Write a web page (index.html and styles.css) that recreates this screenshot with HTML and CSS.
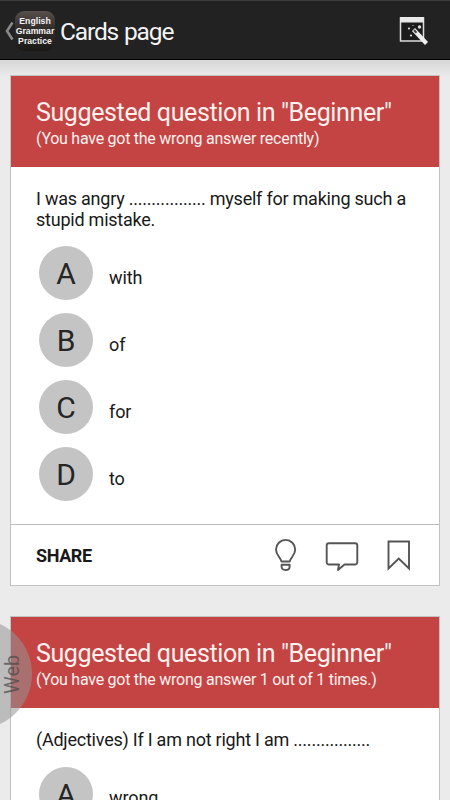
FILE: index.html
```html
<!DOCTYPE html>
<html lang="en">
<head>
<meta charset="utf-8">
<title>Cards page</title>
<link rel="stylesheet" href="styles.css">
</head>
<body>
<header class="bar">
  <svg class="back" width="9" height="20" viewBox="0 0 9 20"><path d="M7.500 1.500 2 10l5.500 8.500" fill="none" stroke="#888" stroke-width="2.600"/></svg>
  <div class="logo">English<br>Grammar<br>Practice</div>
  <h1 class="bar-title">Cards page</h1>
  <svg class="wand" width="30" height="30" viewBox="0 0 30 30">
    <path d="M1.500 2h23v23h-23z" fill="#1b1b1b" stroke="#ddd" stroke-width="1.500"/>
    <path d="M1 1h24v5.500H1z" fill="#e8e8e8"/>
    <path d="m14.500 13.500 13 14" stroke="#eee" stroke-width="4.200"/>
    <path d="m15 14 2.500 2.700" stroke="#444" stroke-width="2"/>
    <g fill="#ddd"><circle cx="20.500" cy="11" r="1.700"/><circle cx="10" cy="12.500" r="1.100"/><circle cx="12" cy="19.500" r="1.100"/><circle cx="14" cy="9.500" r=".6"/></g>
  </svg>
</header>
<main class="cards">
  <article class="card">
    <div class="head">
      <h2 class="title">Suggested question in "Beginner"</h2>
      <p class="sub">(You have got the wrong answer recently)</p>
    </div>
    <div class="body">
      <p class="question">I was angry ................. myself for making such a<br>stupid mistake.</p>
      <ul class="options">
        <li class="option"><span class="letter">A</span><span class="answer">with</span></li>
        <li class="option"><span class="letter">B</span><span class="answer">of</span></li>
        <li class="option"><span class="letter">C</span><span class="answer">for</span></li>
        <li class="option"><span class="letter">D</span><span class="answer">to</span></li>
      </ul>
    </div>
    <div class="foot">
      <span class="share">SHARE</span>
      <svg class="icons" width="142" height="36" viewBox="0 0 142 36" fill="none" stroke="#555" stroke-width="1.900" stroke-linejoin="round">
        <path d="M10.500 26.500C9.300 22 5 20 5 14.500a9.600 9.600 0 0 1 19.200 0c0 5.500-4.300 7.500-5.500 12z"/>
        <path d="M10.600 29.700h8v2c0 2-1.500 3.300-4 3.300s-4-1.300-4-3.300z"/>
        <path d="M58 8.200h26a2.300 2.300 0 0 1 2.300 2.300v16.700a2.300 2.300 0 0 1-2.300 2.300H73.500l-6.500 5.500 1-5.500H58a2.300 2.300 0 0 1-2.300-2.300V10.500a2.300 2.300 0 0 1 2.300-2.300z"/>
        <path d="M117.500 6.500h20.500v27l-10.250-10-10.250 10z" stroke-linejoin="miter"/>
      </svg>
    </div>
  </article>
  <article class="card">
    <div class="head">
      <h2 class="title">Suggested question in "Beginner"</h2>
      <p class="sub">(You have got the wrong answer 1 out of 1 times.)</p>
    </div>
    <div class="body">
      <p class="question">(Adjectives) If I am not right I am .................</p>
      <ul class="options">
        <li class="option"><span class="letter">A</span><span class="answer">wrong</span></li>
      </ul>
    </div>
  </article>
</main>
<div class="web"><span class="web-label">Web</span></div>
</body>
</html>
```
FILE: styles.css
```css
* { box-sizing: border-box; margin: 0; padding: 0; }
body {
  height: 800px;
  overflow: hidden;
  position: relative;
  background: #ebebeb;
  font-family: Roboto, "Liberation Sans", sans-serif;
  color: #191919;
}
.bar {
  height: 60px;
  display: flex;
  align-items: center;
  padding: 1px 21px 0 5px;
  background: #222;
  border-top: 1px solid #3c3c3c;
  border-bottom: 1px solid #000;
}
.logo {
  width: 40px;
  height: 40px;
  margin-left: 1px;
  padding-top: 5px;
  border-radius: 9px;
  background: linear-gradient(#57504d, #302c2a 45%, #1b1a19);
  color: #f2f2f2;
  font: bold 8.7px/10px "Liberation Sans", sans-serif;
  text-align: center;
  white-space: nowrap;
}
.bar-title {
  flex: 1;
  margin-left: 5px;
  padding-top: 1px;
  font-size: 24.5px;
  font-weight: 400;
  letter-spacing: -1.15px;
  word-spacing: 1px;
  color: #f3f3f3;
}
.cards {
  height: 740px;
  padding: 15px 10px 0;
  background: linear-gradient(#d6d6d6, #ebebeb 17px);
  overflow: hidden;
}
.card { margin-bottom: 30px; background: #fff; border: 1px solid #c2c2c2; }
.head { height: 91px; padding: 23px 25px 0; background: #c44343; color: #fff1ee; }
.title { font-size: 25px; line-height: 28px; font-weight: 400; letter-spacing: -.38px; white-space: nowrap; }
.sub { margin-top: 2px; font-size: 16px; line-height: 20px; letter-spacing: -.26px; white-space: nowrap; }
.body { padding: 22px 25px 0; }
.question { font-size: 18px; line-height: 20.5px; letter-spacing: -.23px; white-space: nowrap; }
.options { list-style: none; padding: 16px 0 23px 3px; }
.option { display: flex; align-items: center; height: 54px; margin-bottom: 13px; }
.option:last-child { margin-bottom: 0; }
.letter {
  width: 54px;
  height: 54px;
  margin-right: 16px;
  border-radius: 50%;
  background: #c4c4c4;
  color: #262626;
  font-size: 30px;
  line-height: 56px;
  text-align: center;
}
.answer { padding-top: 8px; font-size: 18px; letter-spacing: -.1px; }
.foot {
  height: 61px;
  display: flex;
  align-items: center;
  justify-content: space-between;
  padding: 0 25px;
  border-top: 1px solid #bdbdbd;
}
.share { font-size: 18px; font-weight: 700; letter-spacing: -.4px; }
.icons { margin: -4px 1px 0 0; }
.web {
  position: absolute;
  left: -78px;
  top: 619px;
  width: 110px;
  height: 110px;
  border-radius: 50%;
  background: rgba(150, 150, 150, .55);
}
.web-label {
  position: absolute;
  left: 79px;
  top: 33px;
  height: 44px;
  width: 22px;
  writing-mode: vertical-rl;
  transform: rotate(180deg);
  text-align: center;
  font-size: 20px;
  line-height: 22px;
  color: rgba(70, 70, 70, .7);
}
```
